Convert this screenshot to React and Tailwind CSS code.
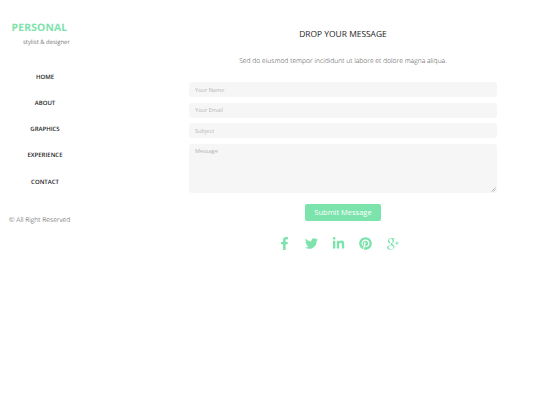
import React from "react";
import { FaFacebookF, FaTwitter, FaLinkedinIn, FaPinterest } from "react-icons/fa";
import { TiSocialGooglePlus } from "react-icons/ti";

const nav = ["HOME", "ABOUT", "GRAPHICS", "EXPERIENCE", "CONTACT"];

function Field({ label }) {
  return (
    <input
      readOnly
      placeholder={label}
      className="h-[15px] w-full rounded-[3px] bg-[#f6f6f6] px-[6px] py-0 text-[5.6px] placeholder:text-[#b5b5b5] outline-none [text-rendering:geometricPrecision]"
    />
  );
}

export default function App() {
  return (
    <div className="flex h-[405px] w-[540px] overflow-hidden bg-white font-['Open_Sans',sans-serif] [text-rendering:geometricPrecision]">
      <aside className="flex w-[189px] shrink-0 flex-col">
        <div className="pl-[11.5px] pt-[19.5px] text-[10.3px] font-bold leading-[16px] tracking-[0.2px] text-[#7be3ab]">PERSONAL</div>
        <div className="pl-[23px] pt-[1px] text-[5.9px] leading-[10px] text-[#777]">stylist &amp; designer</div>
        <nav className="mt-[25px] flex w-[90px] flex-col items-center gap-[16.25px]">
          {nav.map((n) => (
            <a key={n} className="text-[6px] font-semibold leading-[10px] text-[#222]">{n}</a>
          ))}
        </nav>
        <div className="mt-[27.5px] pl-[9px] text-[6.75px] leading-[11px] font-light text-[#444]">© All Right Reserved</div>
      </aside>
      <main className="flex w-[308px] shrink-0 flex-col items-center">
        <h2 className="mt-[28px] text-[8.44px] leading-[13px] text-[#222]">DROP YOUR MESSAGE</h2>
        <p className="mt-[14px] text-[6.75px] leading-[11px] font-light text-[#444]">Sed do eiusmod tempor incididunt ut labore et dolore magna aliqua.</p>
        <form className="mt-[16px] flex w-full flex-col gap-[5.7px]">
          <Field label="Your Name" />
          <Field label="Your Email" />
          <Field label="Subject" />
          <div className="relative h-[49px] w-full">
            <textarea
              readOnly
              placeholder="Message"
              className="block h-full w-full resize-none rounded-[3px] bg-[#f6f6f6] px-[6px] py-[3px] text-[5.6px] placeholder:text-[#b5b5b5] outline-none"
            />
            <svg className="absolute bottom-[1px] right-[1px]" width="5" height="5" viewBox="0 0 5 5">
              <path d="M0.5 4.5L4.5 0.5M2.5 4.5L4.5 2.5" stroke="#999" strokeWidth="0.7" fill="none" />
            </svg>
          </div>
        </form>
        <button className="mt-[11px] h-[17px] w-[76px] rounded-[2px] bg-[#7be3ab] text-[7.5px] leading-[17px] text-white">Submit Message</button>
        <div className="mt-[13px] mr-[10px] flex items-center gap-[14px] text-[13px] text-[#7be3ab]">
          <FaFacebookF />
          <FaTwitter />
          <FaLinkedinIn />
          <FaPinterest />
          <TiSocialGooglePlus className="-mx-[3px] text-[19px]" />
        </div>
      </main>
    </div>
  );
}
